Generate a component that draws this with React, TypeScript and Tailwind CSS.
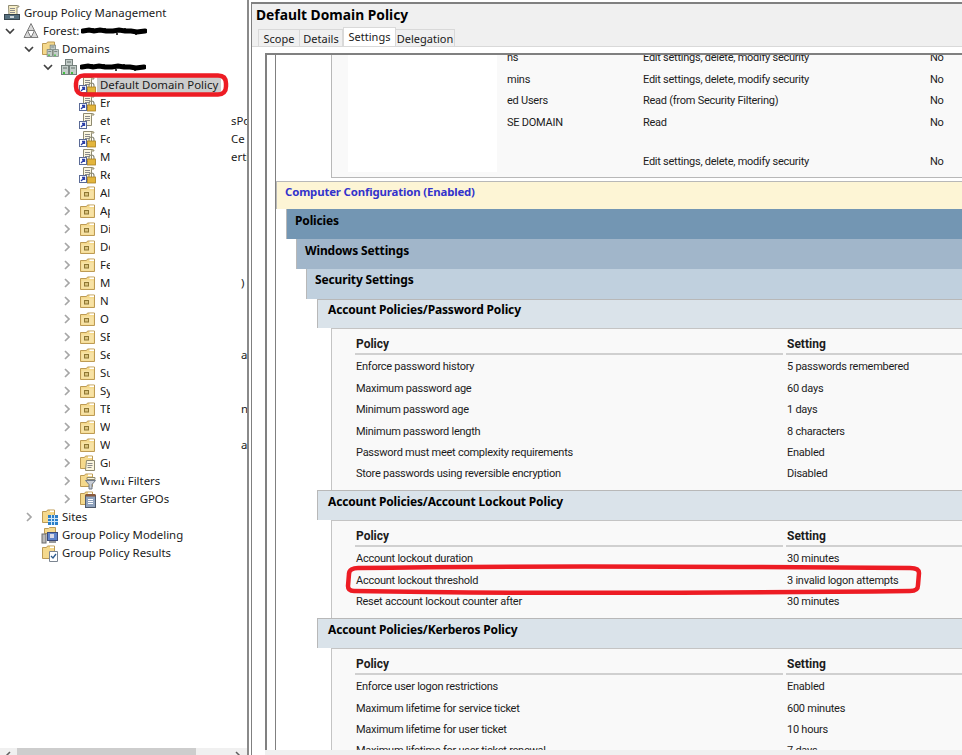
const uiFont = "font-['Noto_Sans','Open_Sans',sans-serif]";

function Chevron({ open }: { open?: boolean }) {
  return (
    <svg width="10" height="10" viewBox="0 0 10 10" fill="none" stroke={open ? "#404040" : "#a6a6a6"} strokeWidth="1.7">
      {open ? <path d="M1 3l4 4 4-4" /> : <path d="M3 1l4 4-4 4" />}
    </svg>
  );
}

function Scroll() {
  return (
    <>
      <path d="M4.500 1.500h9c-1 .5-1 1.500-1 2.500v9.500h-8z" fill="#fbf6df" stroke="#8f8a70" />
      <path d="M13.500 1.500c1 0 1.500.7 1.500 1.500h-2.500" fill="#e9dfb4" stroke="#8f8a70" />
      <path d="M6 4.500h5M6 6.500h5M6 8.500h5" stroke="#8b8b8b" />
    </>
  );
}

function GpoLink({ locked = true }: { locked?: boolean }) {
  return (
    <svg width="18" height="18" viewBox="0 0 18 18">
      <Scroll />
      <rect x="0.500" y="9.500" width="7" height="7" fill="#fff" stroke="#5a6a96" />
      <path d="M2 15l3.500-3.500M3 11.500h2.500V14" stroke="#2b3fa8" strokeWidth="1.300" fill="none" />
      {locked && (
        <>
          <path d="M10 11V9.500a2.500 2.500 0 015 0V11" fill="none" stroke="#8c8c7a" strokeWidth="1.200" />
          <rect x="8.500" y="11" width="8" height="6" fill="#e3b53c" stroke="#a87f1e" strokeWidth="0.800" />
        </>
      )}
    </svg>
  );
}

function OuFolder() {
  return (
    <svg width="18" height="18" viewBox="0 0 18 18">
      <path d="M1.500 4.500h6l1-1.500h7v12.500h-14z" fill="#f5d98c" stroke="#bd9b55" />
      <path d="M2.500 6.500h12v8h-12z" fill="#f7e2a6" />
      <path d="M10.500 3.500h4.500v1.500h-4.500z" fill="#fff" />
      <rect x="5.500" y="8.500" width="4" height="3.500" fill="#d9c27d" stroke="#8e7733" />
    </svg>
  );
}

function SideFolder({ kind }: { kind: string }) {
  return (
    <svg width="18" height="18" viewBox="0 0 18 18">
      <path d="M1.500 3.500h4l1-1.500h7v12.500h-12z" fill="#f5d98c" stroke="#bd9b55" />
      <path d="M9 2.500h4v1.500H9z" fill="#fff" />
      {kind === "gpos" && (
        <>
          <path d="M7.500 6.500h8v10h-9z" fill="#fbf6df" stroke="#8f8a70" />
          <path d="M8.500 9.500h5M8.500 11.500h5M8.500 13.500h4" stroke="#8b8b8b" />
        </>
      )}
      {kind === "wmi" && (
        <>
          <path d="M6.500 8.500h10l-3.500 4v4.500h-3v-4.500z" fill="#c9ced6" stroke="#6f7a88" />
          <path d="M8 5.500h8v2h-8z" fill="#fbf6df" stroke="#8f8a70" />
        </>
      )}
      {kind === "starter" && (
        <>
          <rect x="6.500" y="5.500" width="10" height="12" fill="#8fa2bd" stroke="#4e5a6c" />
          <rect x="6.500" y="4" width="10" height="2.500" fill="#8a5a3c" />
          <path d="M9 9.500h5M9 11.500h5M9 13.500h5" stroke="#fff" />
        </>
      )}
      {kind === "sites" && (
        <>
          <rect x="7" y="7" width="10" height="10" fill="#2c7fc8" />
          <path d="M7 10.500h10M7 13.500h10M10.500 7v10M13.500 7v10" stroke="#cfe6f7" />
        </>
      )}
      {kind === "results" && (
        <>
          <path d="M8.500 7.500h8v10h-8z" fill="#fff" stroke="#7b8591" />
          <path d="M10 12l2 2 3-4" stroke="#2c5a8c" strokeWidth="1.300" fill="none" />
        </>
      )}
    </svg>
  );
}

function Servers() {
  return (
    <>
      <rect x="5.500" y="1.500" width="7" height="7" fill="#c3cdc9" stroke="#74807c" />
      <rect x="1.500" y="7.500" width="7" height="9" fill="#c3cdc9" stroke="#74807c" />
      <rect x="9.500" y="7.500" width="7" height="9" fill="#c3cdc9" stroke="#74807c" />
      <path d="M3 10h4M11 10h4M7 4h4" stroke="#65706c" />
      <rect x="3" y="14" width="2" height="2" fill="#3fbf3f" />
      <rect x="11" y="14" width="2" height="2" fill="#3fbf3f" />
    </>
  );
}

function ConsoleIcon() {
  return (
    <svg width="18" height="18" viewBox="0 0 18 18">
      <path d="M5.500 1.500h9c1 0 1.500.6 1.500 1.500h-2v8h-8z" fill="#f8efc8" stroke="#8f8a70" />
      <path d="M7 4.500h5M7 6.500h5M7 8.500h5" stroke="#8b8b8b" />
      <rect x="1.500" y="10.500" width="15" height="5" fill="#56707f" stroke="#36444d" />
      <rect x="7" y="12" width="4" height="2" fill="#cfd8dc" />
    </svg>
  );
}

function ForestIcon() {
  return (
    <svg width="18" height="18" viewBox="0 0 18 18" fill="#d8d8d8" stroke="#7d7d7d">
      <path d="M9 1.500L12.500 8.500h-7z" />
      <path d="M5.500 8.500L9 15.500H2z" />
      <path d="M12.500 8.500L16 15.500H9z" />
    </svg>
  );
}

function DomainsIcon() {
  return (
    <svg width="18" height="18" viewBox="0 0 18 18">
      <path d="M1.500 3.500h4l1-1.500h7v12.500h-12z" fill="#f5d98c" stroke="#bd9b55" />
      <g transform="translate(5 4) scale(0.75)">
        <Servers />
      </g>
    </svg>
  );
}

function ModelingIcon() {
  return (
    <svg width="18" height="18" viewBox="0 0 18 18">
      <path d="M3.500 2.500h4l1-1h6v6h-11z" fill="#f5d98c" stroke="#bd9b55" />
      <rect x="1" y="8" width="4" height="9" fill="#b9b9b9" stroke="#6d6d6d" />
      <rect x="6.500" y="6.500" width="10" height="8" fill="#5f83c9" stroke="#3c4a78" />
      <rect x="9" y="8" width="4" height="4" fill="#d9d9e8" />
      <rect x="8" y="15" width="7" height="2" fill="#9a9a9a" />
    </svg>
  );
}

// black marker strokes that hide the domain name
function Scribble() {
  return (
    <svg width="66" height="10" viewBox="0 0 66 10">
      <path
        d="M2 5l6-1 5 1 6-1 6 1 7 0 6-1 6 1 6 0 6 1 8-1"
        stroke="#000"
        strokeWidth="5"
        fill="none"
        strokeLinecap="round"
      />
      <path d="M12 2v2M24 2v3M44 2v3M55 7v2M36 7v2" stroke="#000" strokeWidth="1.500" />
    </svg>
  );
}

const indent: Record<number, string> = {
  1: "pl-[3px]",
  2: "pl-[22px]",
  3: "pl-[41px]",
  4: "pl-[60px]",
};

function TreeRow({
  depth,
  chevron,
  icon,
  children,
  tail,
}: {
  depth: number;
  chevron?: "open" | "closed";
  icon: React.ReactNode;
  children: React.ReactNode;
  tail?: string;
}) {
  return (
    <div className={`flex h-[18px] items-center whitespace-nowrap ${indent[depth]}`}>
      <span className="flex w-[19px] shrink-0 justify-start pl-[2px]">
        {chevron && <Chevron open={chevron === "open"} />}
      </span>
      <span className="flex h-[18px] w-[21px] shrink-0 items-center">{icon}</span>
      {children}
      {tail && (
        <span className={`ml-auto shrink-0 overflow-hidden ${tail.length === 1 ? "w-[6px]" : "w-[16px]"}`}>{tail}</span>
      )}
    </div>
  );
}

function CutLabel({ text }: { text: string }) {
  return <span className="w-[10px] overflow-hidden">{text}</span>;
}

function Tree() {
  const ous: [string, string?][] = [
    ["Al"],
    ["Ap"],
    ["Di"],
    ["Do"],
    ["Fe"],
    ["M", ")"],
    ["N"],
    ["O"],
    ["SE"],
    ["Se", "a"],
    ["Su"],
    ["Sy"],
    ["TE", "n"],
    ["W"],
    ["W", "a"],
  ];
  return (
    <div className="flex-1 overflow-hidden pt-[4px] text-[11.400px] text-[#1a1a1a]">
      <div className="flex h-[18px] items-center pl-[3px]">
        <span className="flex w-[21px] shrink-0 items-center">
          <ConsoleIcon />
        </span>
        Group Policy Management
      </div>
      <TreeRow depth={1} chevron="open" icon={<ForestIcon />}>
        Forest:
        <span className="ml-[2px] flex">
          <Scribble />
        </span>
      </TreeRow>
      <TreeRow depth={2} chevron="open" icon={<DomainsIcon />}>
        Domains
      </TreeRow>
      <TreeRow
        depth={3}
        chevron="open"
        icon={
          <svg width="18" height="18" viewBox="0 0 18 18">
            <Servers />
          </svg>
        }
      >
        <span className="ml-[-1px] flex">
          <Scribble />
        </span>
      </TreeRow>
      <TreeRow depth={4} icon={<GpoLink />}>
        <span className="ml-[-3px] bg-[#cccccc] pl-[3px] pr-[3px] leading-[18px]">Default Domain Policy</span>
      </TreeRow>
      <TreeRow depth={4} icon={<GpoLink />}>
        <CutLabel text="Er" />
      </TreeRow>
      <TreeRow depth={4} icon={<GpoLink locked={false} />} tail="sPo">
        <CutLabel text="et" />
      </TreeRow>
      <TreeRow depth={4} icon={<GpoLink />} tail="Ce">
        <CutLabel text="Fo" />
      </TreeRow>
      <TreeRow depth={4} icon={<GpoLink />} tail="ertifi">
        <CutLabel text="M" />
      </TreeRow>
      <TreeRow depth={4} icon={<GpoLink />}>
        <CutLabel text="Re" />
      </TreeRow>
      {ous.map(([label, tail], i) => (
        <TreeRow key={i} depth={4} chevron="closed" icon={<OuFolder />} tail={tail}>
          <CutLabel text={label} />
        </TreeRow>
      ))}
      <TreeRow depth={4} chevron="closed" icon={<SideFolder kind="gpos" />}>
        <CutLabel text="Gr" />
      </TreeRow>
      <TreeRow depth={4} chevron="closed" icon={<SideFolder kind="wmi" />}>
        <span className="relative">
          WMI Filters
          <span className="absolute left-[8px] right-[36px] top-0 h-[8px] bg-white" />
        </span>
      </TreeRow>
      <TreeRow depth={4} chevron="closed" icon={<SideFolder kind="starter" />}>
        Starter GPOs
      </TreeRow>
      <TreeRow depth={2} chevron="closed" icon={<SideFolder kind="sites" />}>
        Sites
      </TreeRow>
      <TreeRow depth={2} icon={<ModelingIcon />}>
        Group Policy Modeling
      </TreeRow>
      <TreeRow depth={2} icon={<SideFolder kind="results" />}>
        Group Policy Results
      </TreeRow>
    </div>
  );
}

function SectionBar({
  className,
  textClass,
  children,
}: {
  className: string;
  textClass: string;
  children: React.ReactNode;
}) {
  return (
    <div className={`border-l border-t border-[#b8b8b8] text-[12px] font-bold tracking-[-0.150px] ${className}`}>
      <div className={textClass}>{children}</div>
    </div>
  );
}

function PolicyTable({ rows }: { rows: [string, string][] }) {
  return (
    <div className="ml-[55px] border-l border-t border-[#c4c4c4] bg-[#f9f9f9] pb-[4.600px] pl-[23px] font-['Roboto',sans-serif] text-[11px] tracking-[-0.250px] text-[#1c1c1c]">
      <div className="grid h-[25px] grid-cols-[428px_1fr] gap-x-[3px] text-[12px] font-bold tracking-normal">
        <div className="border-b-2 border-[#d0d0d0] pl-[1px] pt-[6px] leading-[18px]">Policy</div>
        <div className="border-b-2 border-[#d0d0d0] pl-[1px] pt-[6px] leading-[18px]">Setting</div>
      </div>
      <div className="mt-[3px]">
        {rows.map(([name, value]) => (
          <div key={name} className="grid h-[21.400px] grid-cols-[428px_1fr] items-center gap-x-[3px] whitespace-nowrap">
            <div className="pl-[1px]">{name}</div>
            <div className="pl-[1px]">{value}</div>
          </div>
        ))}
      </div>
    </div>
  );
}

function PermissionRow({ who, perm, className }: { who: string; perm: string; className?: string }) {
  return (
    <div className={`grid h-[21.500px] grid-cols-[136px_287px_1fr] items-center whitespace-nowrap ${className ?? ""}`}>
      <div>{who}</div>
      <div>{perm}</div>
      <div>No</div>
    </div>
  );
}

function Report() {
  return (
    <div className="flex-1 overflow-hidden">
      <div className="ml-[55px] flex h-[123px] border-b border-l border-[#b8b8b8] bg-[#f9f9f9] font-['Roboto',sans-serif] text-[11px] tracking-[-0.250px] text-[#1c1c1c]">
        <div className="ml-[16px] h-[117px] w-[149px] shrink-0 bg-white" />
        <div className="ml-[10px] mt-[-7.500px] flex-1">
          <PermissionRow who="ns" perm="Edit settings, delete, modify security" />
          <PermissionRow who="mins" perm="Edit settings, delete, modify security" />
          <PermissionRow who="ed Users" perm="Read (from Security Filtering)" />
          <PermissionRow who="SE DOMAIN" perm="Read" />
          <PermissionRow who="" perm="Edit settings, delete, modify security" className="mt-[17.500px]" />
        </div>
      </div>
      <div className="mt-[3px]">
        <SectionBar className="h-[28px] bg-[#fdf5d5] text-[#3333cc]" textClass="pl-[8px] pt-[1px] text-[11.400px] leading-[18px]">
          Computer Configuration (Enabled)
        </SectionBar>
        <div className="ml-[10px] h-[30px] border-l border-[#b8b8b8] bg-[#7396b3] pl-[8px] pt-[3px] text-[12px] font-bold leading-[18px] tracking-[-0.150px] text-black">
          Policies
        </div>
        <div className="ml-[20px] h-[30px] border-l border-[#b8b8b8] bg-[#a1b6ca] pl-[8px] pt-[3px] text-[12px] font-bold leading-[18px] tracking-[-0.150px] text-black">
          Windows Settings
        </div>
        <div className="ml-[30px] h-[30px] border-l border-[#b8b8b8] bg-[#c0d0de] pl-[8px] pt-[2px] text-[12px] font-bold leading-[18px] tracking-[-0.150px] text-black">
          Security Settings
        </div>
        <SectionBar className="ml-[41px] h-[29px] bg-[#dae3ea] text-black" textClass="pl-[10px] pt-[1px] leading-[18px]">
          Account Policies/Password Policy
        </SectionBar>
        <PolicyTable
          rows={[
            ["Enforce password history", "5 passwords remembered"],
            ["Maximum password age", "60 days"],
            ["Minimum password age", "1 days"],
            ["Minimum password length", "8 characters"],
            ["Password must meet complexity requirements", "Enabled"],
            ["Store passwords using reversible encryption", "Disabled"],
          ]}
        />
        <SectionBar className="ml-[41px] h-[30px] bg-[#dae3ea] text-black" textClass="pl-[10px] pt-[2px] leading-[18px]">
          Account Policies/Account Lockout Policy
        </SectionBar>
        <PolicyTable
          rows={[
            ["Account lockout duration", "30 minutes"],
            ["Account lockout threshold", "3 invalid logon attempts"],
            ["Reset account lockout counter after", "30 minutes"],
          ]}
        />
        <SectionBar className="ml-[41px] h-[30px] bg-[#dae3ea] text-black" textClass="pl-[10px] pt-[2px] leading-[18px]">
          Account Policies/Kerberos Policy
        </SectionBar>
        <PolicyTable
          rows={[
            ["Enforce user logon restrictions", "Enabled"],
            ["Maximum lifetime for service ticket", "600 minutes"],
            ["Maximum lifetime for user ticket", "10 hours"],
            ["Maximum lifetime for user ticket renewal", "7 days"],
          ]}
        />
      </div>
    </div>
  );
}

export default function App() {
  return (
    <div className={`relative flex h-[755px] w-[962px] overflow-hidden bg-white ${uiFont}`}>
      <div className="flex w-[249px] shrink-0 flex-col border-r-2 border-[#8a8a8a]">
        <Tree />
        <div className="flex h-[7px] items-start bg-[#f0f0f0]">
          <svg width="17" height="7" viewBox="0 0 17 7" fill="none" stroke="#606060" strokeWidth="1.500">
            <path d="M10 4L6 8" />
          </svg>
          <div className="h-[7px] w-[179px] bg-[#cdcdcd]" />
          <svg width="47" height="7" viewBox="0 0 47 7" fill="none" stroke="#606060" strokeWidth="1.500" className="ml-[2px]">
            <path d="M38 4l4 4" />
          </svg>
        </div>
      </div>
      <div className="ml-[2px] mt-[2px] flex min-w-0 flex-1 flex-col border-l border-t-2 border-[#808080] bg-[#f0f0f0]">
        <div className="h-[23px] pl-[4px] pt-[1px] text-[13.800px] font-bold leading-[20px] text-black">
          Default Domain Policy
        </div>
        <div className="flex h-[19px] items-end pl-[6px] text-[11px] text-[#1a1a1a]">
          <div className="flex h-[17px] w-[42px] items-center justify-center border border-b-0 border-[#d9d9d9] bg-[#f0f0f0] pt-[2px]">Scope</div>
          <div className="flex h-[17px] w-[43px] items-center justify-center border border-b-0 border-l-0 border-[#d9d9d9] bg-[#f0f0f0] pt-[2px]">Details</div>
          <div className="flex h-[19px] w-[53px] items-center justify-center border border-b-0 border-[#d9d9d9] bg-white">Settings</div>
          <div className="flex h-[17px] w-[59px] items-center justify-center border border-b-0 border-l-0 border-[#d9d9d9] bg-[#f0f0f0] pt-[2px]">Delegation</div>
        </div>
        <div className="flex min-h-0 flex-1 flex-col border-t border-[#d9d9d9] bg-white pl-[13px] pt-[6px]">
          <div className="flex min-h-0 flex-1 border-l-2 border-t-2 border-[#808080]">
            <div className="w-[8px] shrink-0 bg-white" />
            <div className="flex min-w-0 flex-1 flex-col border-l border-[#808080]">
              <Report />
            </div>
          </div>
          <div className="h-[5px] shrink-0 bg-[#f0f0f0]" />
        </div>
      </div>
      {/* red marker rings drawn on top of the screenshot */}
      <svg className="pointer-events-none absolute inset-0" width="962" height="755" fill="none" stroke="#ed1c24" strokeWidth="4.500">
        <path d="M84 75.500h134c6 0 8 3 8 8v3c0 5-3 8-8 8H84c-5 0-8-3-8-8v-3c0-5 3-8 8-8z" />
        <path d="M358 568c120-2 300-2 552 0 6 0 9 2 9 5l-1 12c0 4-2 6-8 6-180 2-380 3-556 0-4 0-6-2-6-5l1-12c0-4 4-6 9-6z" />
      </svg>
    </div>
  );
}
